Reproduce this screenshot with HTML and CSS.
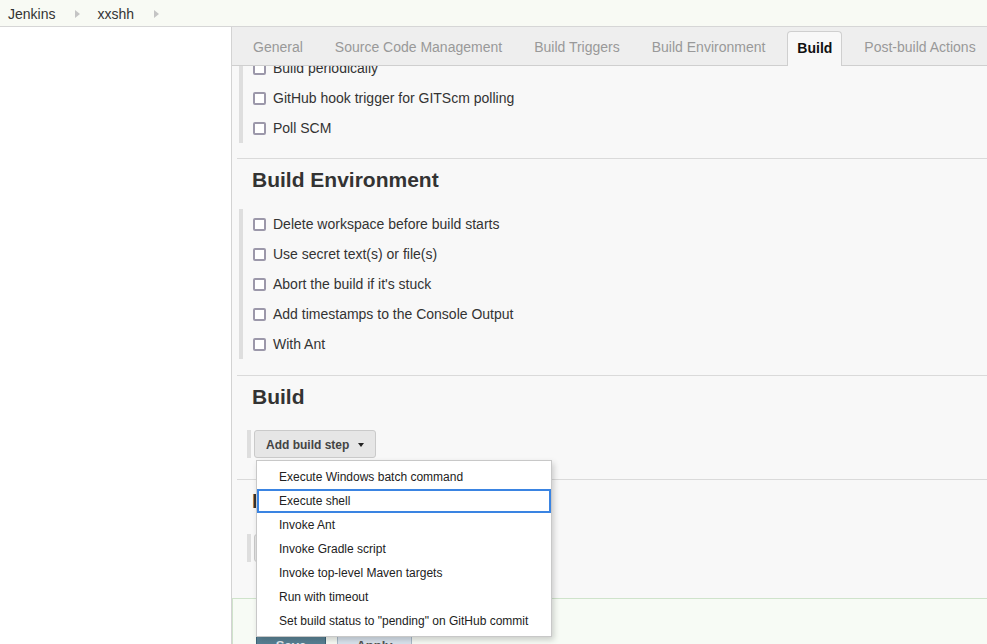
FILE: index.html
```html
<!DOCTYPE html>
<html lang="en">
<head>
<meta charset="utf-8">
<title>xxshh Config [Jenkins]</title>
<link rel="stylesheet" href="styles.css">
</head>
<body>
<div class="breadcrumbs">
  <a class="crumb">Jenkins</a>
  <svg class="crumb-arrow" width="5" height="8" viewBox="0 0 5 8"><polygon points="0,0 5,4 0,8" fill="#c4c4c4"/></svg>
  <a class="crumb">xxshh</a>
  <svg class="crumb-arrow" width="5" height="8" viewBox="0 0 5 8"><polygon points="0,0 5,4 0,8" fill="#c4c4c4"/></svg>
</div>
<div class="layout">
  <aside class="sidebar"></aside>
  <main class="main">
    <nav class="tabbar">
      <span class="tab">General</span>
      <span class="tab">Source Code Management</span>
      <span class="tab">Build Triggers</span>
      <span class="tab">Build Environment</span>
      <span class="tab active">Build</span>
      <span class="tab">Post-build Actions</span>
    </nav>
    <div class="content">
      <div class="scroll">
        <section class="section first">
          <div class="block">
            <label class="row"><span class="cb"></span>Build periodically</label>
            <label class="row"><span class="cb"></span>GitHub hook trigger for GITScm polling</label>
            <label class="row"><span class="cb"></span>Poll SCM</label>
          </div>
        </section>
        <section class="section">
          <h2 class="heading">Build Environment</h2>
          <div class="block">
            <label class="row"><span class="cb"></span>Delete workspace before build starts</label>
            <label class="row"><span class="cb"></span>Use secret text(s) or file(s)</label>
            <label class="row"><span class="cb"></span>Abort the build if it's stuck</label>
            <label class="row"><span class="cb"></span>Add timestamps to the Console Output</label>
            <label class="row"><span class="cb"></span>With Ant</label>
          </div>
        </section>
        <section class="section">
          <h2 class="heading">Build</h2>
          <div class="btn-block">
            <button class="menu-btn">Add build step<span class="caret"></span></button>
          </div>
        </section>
        <section class="section">
          <h2 class="heading">Post-build Actions</h2>
          <div class="btn-block">
            <button class="menu-btn">Add post-build action<span class="caret"></span></button>
          </div>
        </section>
      </div>
    </div>
    <div class="bottom-bar">
      <button class="btn-save">Save</button>
      <button class="btn-apply">Apply</button>
    </div>
    <ul class="dropdown">
      <li class="item">Execute Windows batch command</li>
      <li class="item focused">Execute shell</li>
      <li class="item">Invoke Ant</li>
      <li class="item">Invoke Gradle script</li>
      <li class="item">Invoke top-level Maven targets</li>
      <li class="item">Run with timeout</li>
      <li class="item">Set build status to "pending" on GitHub commit</li>
    </ul>
  </main>
</div>
</body>
</html>
```

FILE: styles.css
```css
* { box-sizing: border-box; }
html, body {
  margin: 0;
  padding: 0;
  height: 100%;
  overflow: hidden;
}
body {
  font-family: "Liberation Sans", Arial, sans-serif;
  font-size: 14px;
  color: #333;
  background: #fff;
}
.breadcrumbs {
  height: 27px;
  background: #f8faf4;
  border-bottom: 1px solid #d6d6d6;
  display: flex;
  align-items: center;
  padding: 2px 0 0 8px;
}
.crumb {
  color: #333;
  font-size: 14px;
}
.crumb-arrow {
  margin: 0 17px 0 20px;
}
.layout {
  display: flex;
  height: 617px;
}
.sidebar {
  width: 232px;
  flex: none;
  background: #fff;
  border-right: 1px solid #d3d3d3;
}
.main {
  flex: 1;
  position: relative;
  display: flex;
  flex-direction: column;
  background: #f8f8f8;
  min-width: 0;
}
.tabbar {
  flex: none;
  height: 39px;
  background: #eeeeee;
  border-bottom: 1px solid #cfcfcf;
  display: flex;
  align-items: flex-end;
  padding-left: 5px;
  white-space: nowrap;
}
.tab {
  padding: 2px 16px 0;
  line-height: 36px;
  color: #999;
  font-size: 14px;
}
.tab.active {
  margin: 0 6px -1px;
  padding: 1px 9px 3px;
  line-height: 30px;
  color: #111;
  font-weight: bold;
  background: #f8f8f8;
  border: 1px solid #cfcfcf;
  border-bottom: none;
  border-radius: 4px 4px 0 0;
}
.content {
  flex: 1;
  overflow: hidden;
  padding-left: 5px;
}
.scroll {
  margin-top: -13px;
}
.section {
  border-top: 1px solid #dadada;
}
.section.first {
  border-top: none;
}
.heading {
  margin: 8px 0 16px 15px;
  font-size: 21px;
  line-height: 26px;
  font-weight: bold;
  color: #333;
}
.block {
  margin: 0 0 15px 2px;
  border-left: 4px solid #dedede;
  padding-left: 10px;
}
.section + .section .block {
  margin-bottom: 16px;
}
.row {
  display: flex;
  align-items: center;
  height: 30px;
  font-size: 14px;
  color: #333;
}
.cb {
  width: 13px;
  height: 13px;
  border: 2px solid #9c98aa;
  border-radius: 2px;
  background: #fff;
  margin-right: 7px;
  flex: none;
}
.btn-block {
  margin: 20px 0 21px 10px;
  border-left: 4px solid #dedede;
  padding-left: 3px;
  height: 28px;
}
.menu-btn {
  height: 28px;
  padding: 1px 11px 0;
  font-family: "Liberation Sans", Arial, sans-serif;
  font-size: 12px;
  font-weight: bold;
  color: #444;
  background: #e6e6e6;
  border: 1px solid #cacaca;
  border-radius: 3px;
  display: flex;
  align-items: center;
}
.caret {
  display: inline-block;
  width: 0;
  height: 0;
  margin-left: 9px;
  border-left: 3.5px solid transparent;
  border-right: 3.5px solid transparent;
  border-top: 4px solid #222;
}
.bottom-bar {
  flex: none;
  height: 46px;
  background: #f7fbf5;
  border-top: 1px solid #cfe3cb;
  border-left: 1px solid #cfe3cb;
  padding: 33px 0 0 23px;
  display: flex;
  gap: 11px;
  align-items: flex-start;
  overflow: hidden;
}
.btn-save, .btn-apply {
  height: 26px;
  font-family: "Liberation Sans", Arial, sans-serif;
  font-size: 13px;
  font-weight: bold;
  padding: 2px 0 0;
  line-height: 14px;
}
.btn-save {
  width: 70px;
  background: linear-gradient(#5f8799, #4b758b);
  border: 1px solid #3b6478;
  color: #e4ecf0;
}
.btn-apply {
  width: 75px;
  background: #d9e3ed;
  border: 1px solid #a9b9c8;
  color: #555;
}
.dropdown {
  position: absolute;
  left: 24px;
  top: 433px;
  width: 296px;
  margin: 0;
  padding: 4px 0 3px;
  list-style: none;
  background: #fff;
  border: 1px solid #c8c8c8;
  box-shadow: 2px 3px 6px rgba(0, 0, 0, 0.18);
}
.item {
  height: 24px;
  line-height: 24px;
  padding-left: 22px;
  font-size: 12px;
  color: #222;
  white-space: nowrap;
}
.item.focused {
  outline: 2px solid #3a84e2;
  outline-offset: -2px;
}
```
